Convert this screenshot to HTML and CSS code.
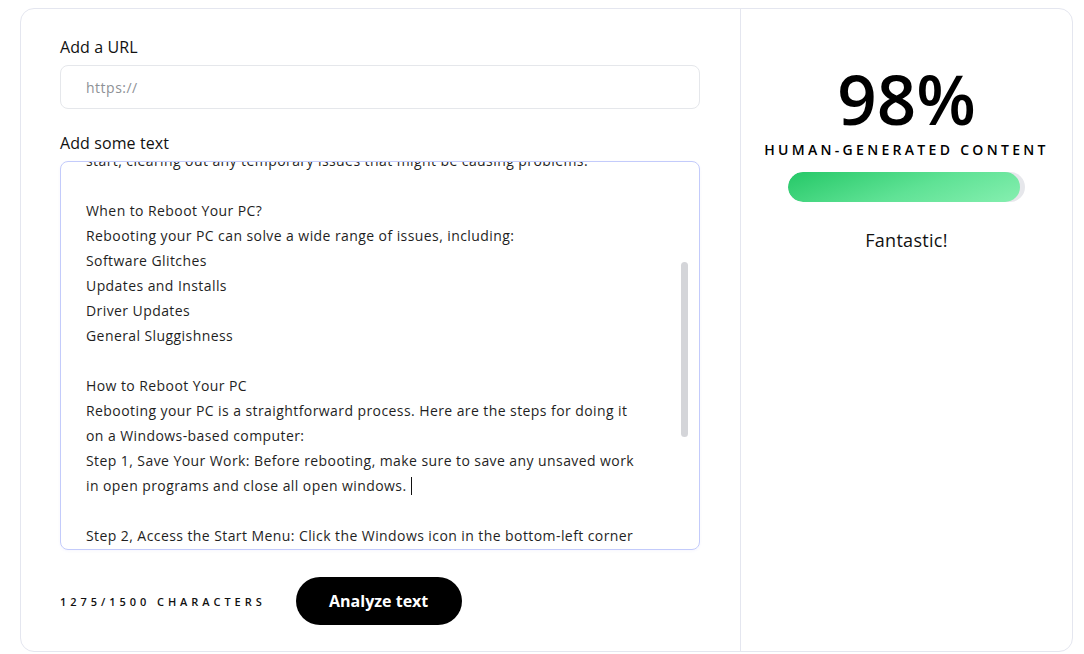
FILE: index.html
```html
<!DOCTYPE html>
<html lang="en">
<head>
<meta charset="utf-8">
<title>AI Content Detector</title>
<link rel="stylesheet" href="styles.css">
</head>
<body>
<main class="card">
  <section class="editor">
    <label class="label">Add a URL</label>
    <div class="url-input"><span class="placeholder">https://</span></div>
    <label class="label label-text">Add some text</label>
    <div class="textbox">
      <div class="textbox-inner">
        <p>start, clearing out any temporary issues that might be causing problems.</p>
        <p class="blank">&nbsp;</p>
        <p>When to Reboot Your PC?</p>
        <p>Rebooting your PC can solve a wide range of issues, including:</p>
        <p>Software Glitches</p>
        <p>Updates and Installs</p>
        <p>Driver Updates</p>
        <p>General Sluggishness</p>
        <p class="blank">&nbsp;</p>
        <p>How to Reboot Your PC</p>
        <p>Rebooting your PC is a straightforward process. Here are the steps for doing it</p>
        <p>on a Windows-based computer:</p>
        <p>Step 1, Save Your Work: Before rebooting, make sure to save any unsaved work</p>
        <p>in open programs and close all open windows.<span class="caret"></span></p>
        <p class="blank">&nbsp;</p>
        <p>Step 2, Access the Start Menu: Click the Windows icon in the bottom-left corner</p>
        <p>of your screen to open the Start Menu.</p>
      </div>
      <div class="scroll-thumb"></div>
    </div>
    <div class="actions">
      <span class="counter">1275/1500 Characters</span>
      <button class="analyze">Analyze text</button>
    </div>
  </section>
  <aside class="result">
    <div class="score">98%</div>
    <div class="score-label">Human-generated content</div>
    <div class="bar"><div class="bar-fill" style="width: 98%"></div></div>
    <div class="verdict">Fantastic!</div>
  </aside>
</main>
</body>
</html>
```
FILE: styles.css
```css
* { box-sizing: border-box; }
html, body { margin: 0; background: #ffffff; }
body {
  padding: 8px 11px 2px 20px;
  font-family: "Open Sans", "Liberation Sans", sans-serif;
  color: #111111;
}
.card {
  display: grid;
  grid-template-columns: 720px 1fr;
  height: 644px;
  border: 1px solid #e4e6ef;
  border-radius: 14px;
  background: #ffffff;
}
.editor {
  display: flex;
  flex-direction: column;
  padding: 26px 40px 0 39px;
  border-right: 1px solid #e4e6ef;
}
.label {
  font-size: 16px;
  line-height: 24px;
  font-weight: 500;
  letter-spacing: 0.1px;
  color: #111111;
}
.label-text { margin-top: 22px; }
.url-input {
  margin-top: 6px;
  height: 44px;
  border: 1px solid #e5e7eb;
  border-radius: 8px;
  display: flex;
  align-items: center;
  padding-left: 25px;
}
.placeholder {
  font-size: 14px;
  letter-spacing: 0.5px;
  color: #8e9196;
}
.textbox {
  position: relative;
  margin-top: 6px;
  height: 389px;
  border: 1px solid #c3cbfb;
  border-radius: 8px;
  overflow: hidden;
  box-shadow: 0 1px 3px rgba(99, 102, 241, 0.06);
}
.textbox-inner {
  margin-top: -14px;
  padding: 0 50px 0 25px;
  font-size: 14px;
  line-height: 25px;
  letter-spacing: 0.42px;
  color: #1f1f1f;
}
.textbox-inner p { margin: 0; white-space: nowrap; }
.caret {
  display: inline-block;
  width: 1px;
  height: 18px;
  margin-left: 4px;
  vertical-align: -4px;
  background: #111111;
}
.scroll-thumb {
  position: absolute;
  right: 11px;
  top: 100px;
  width: 7px;
  height: 175px;
  border-radius: 4px;
  background: #d4d5d9;
}
.actions {
  margin-top: 27px;
  display: flex;
  align-items: center;
  gap: 30px;
}
.counter {
  font-size: 11px;
  font-weight: 600;
  letter-spacing: 3.95px;
  text-transform: uppercase;
  color: #111111;
}
.analyze {
  width: 166px;
  height: 48px;
  border: none;
  border-radius: 24px;
  background: #000000;
  color: #ffffff;
  font-family: inherit;
  font-size: 16px;
  font-weight: 700;
}
.result {
  display: flex;
  flex-direction: column;
  align-items: center;
  padding-top: 53px;
}
.score {
  font-size: 69px;
  line-height: 72px;
  font-weight: 600;
  color: #000000;
}
.score-label {
  margin-top: 6px;
  font-size: 14px;
  line-height: 20px;
  font-weight: 600;
  letter-spacing: 3.3px;
  text-transform: uppercase;
  color: #000000;
}
.bar {
  margin-top: 12px;
  width: 237px;
  height: 30px;
  border-radius: 15px;
  background: #e6e7eb;
  overflow: hidden;
}
.bar-fill {
  height: 100%;
  border-radius: 15px;
  background: linear-gradient(160deg, #25c867 0%, #5fe295 55%, #86efb0 100%);
}
.verdict {
  margin-top: 26px;
  font-size: 18px;
  line-height: 24px;
  letter-spacing: 0.3px;
  color: #111111;
}
```
